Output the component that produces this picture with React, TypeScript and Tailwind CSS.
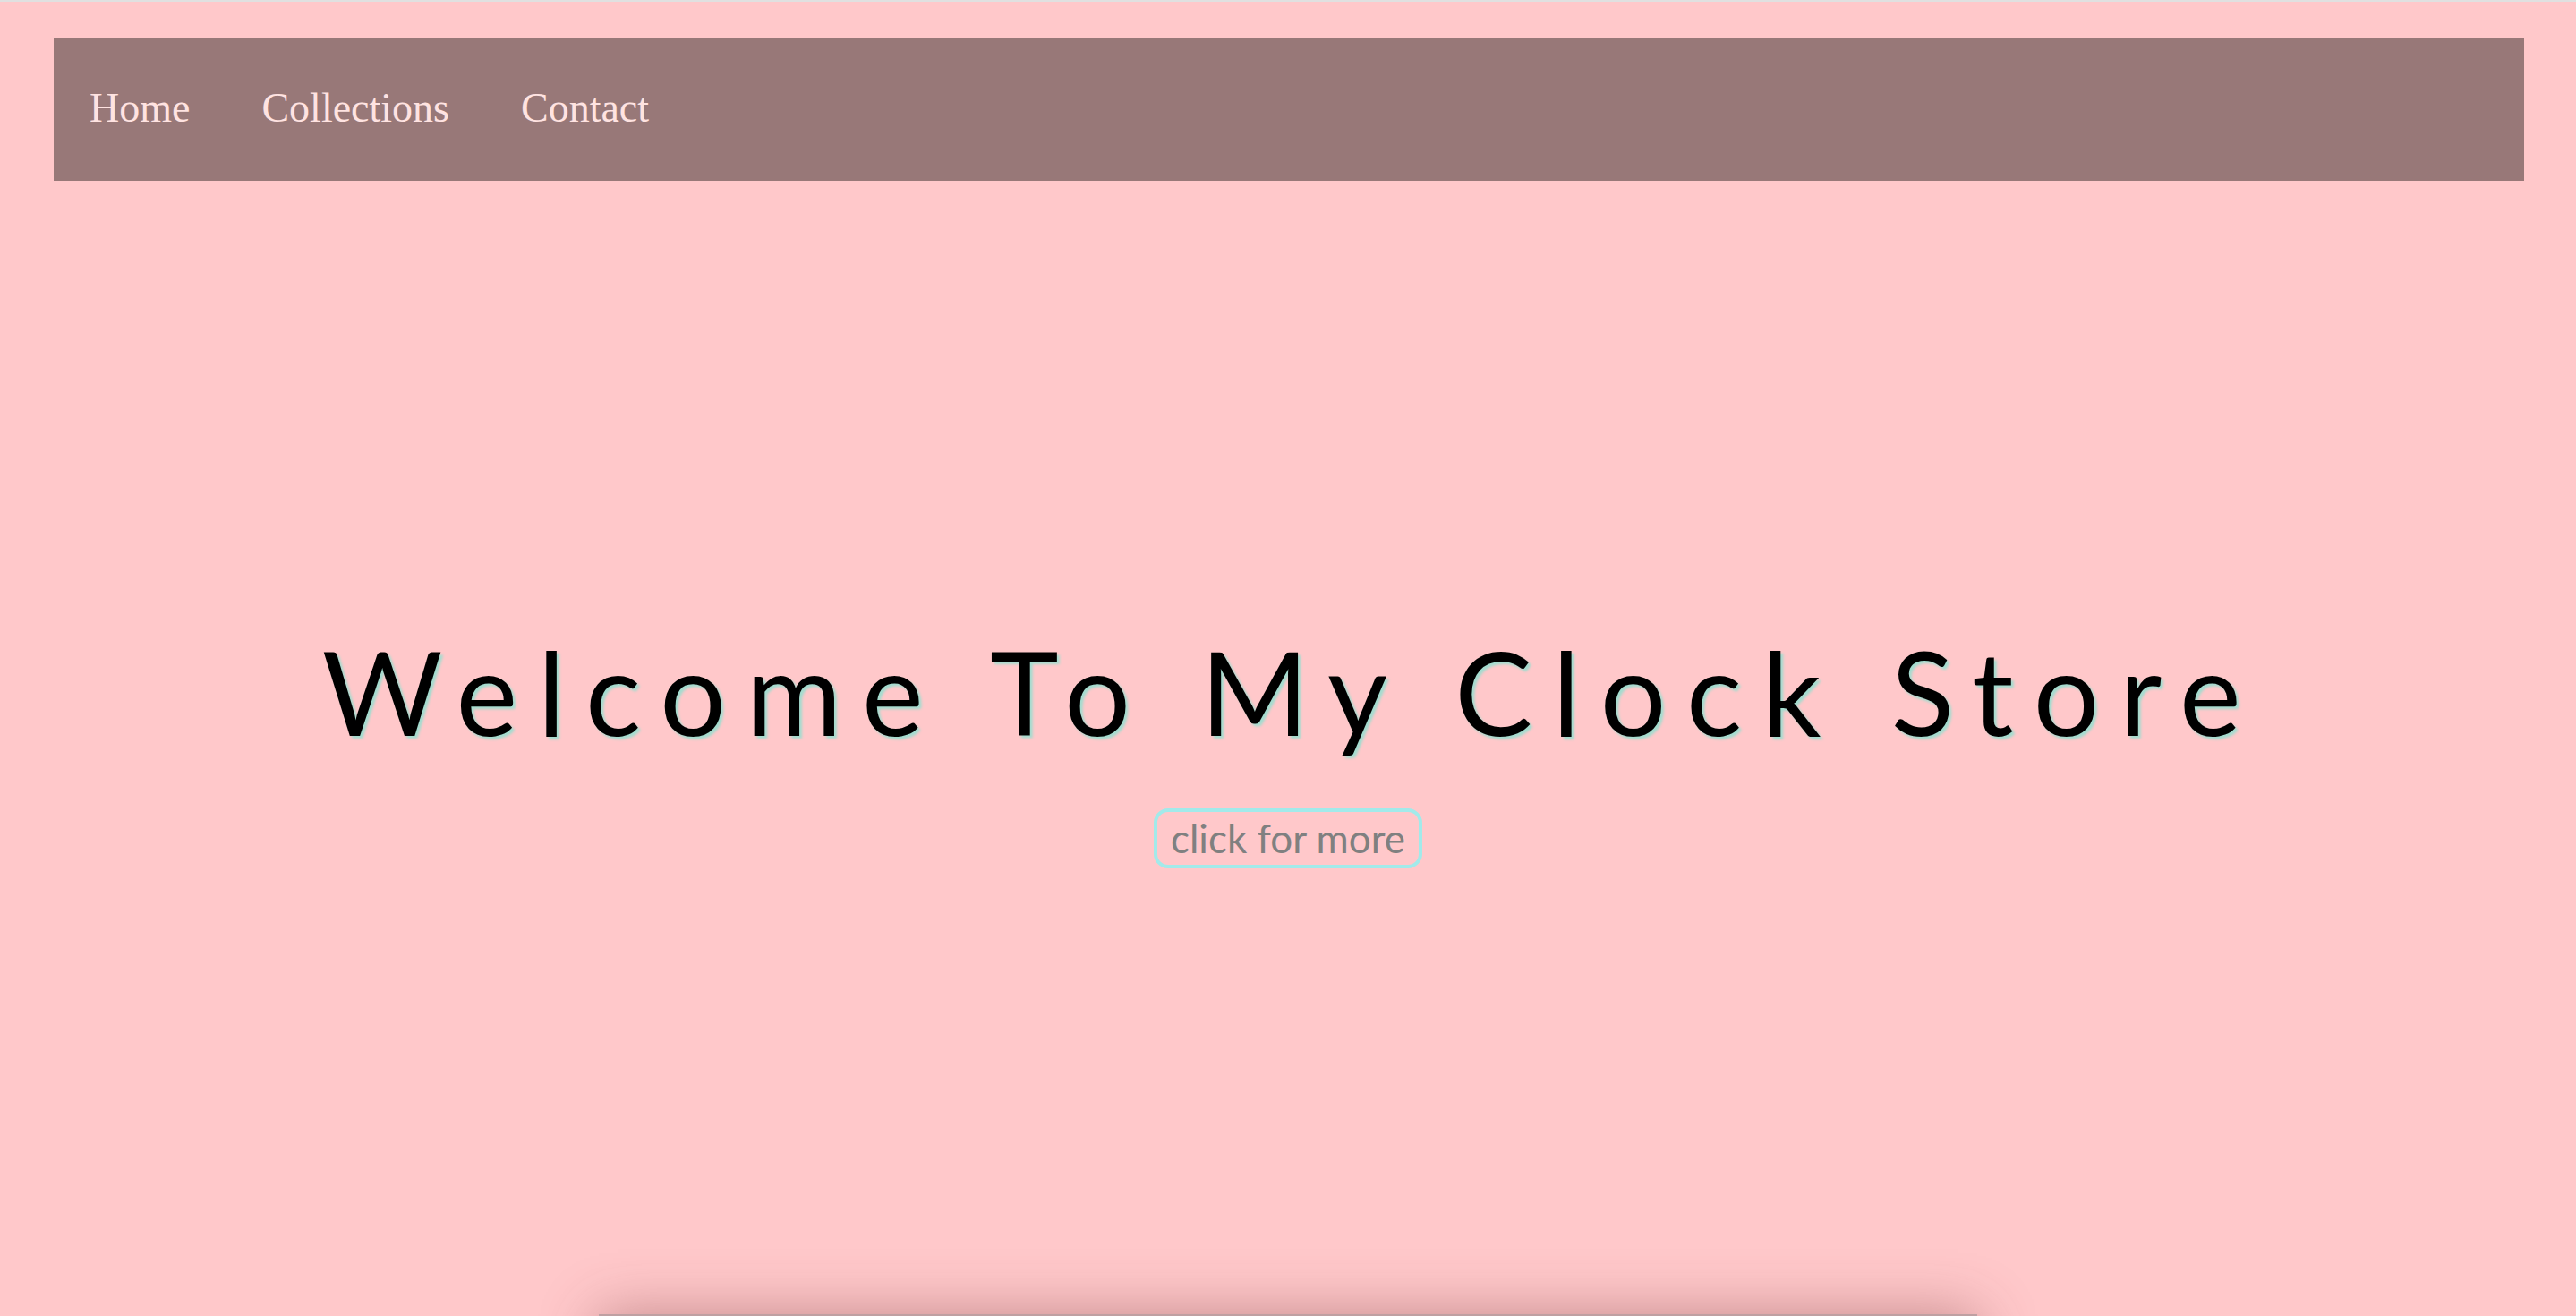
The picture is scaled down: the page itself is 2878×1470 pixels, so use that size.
export default function App() {
  return (
    <div className="min-h-screen bg-[#ffc8ca]">
      <div className="h-[2px] bg-[#e0e0e0]" />
      <nav className="ml-[60px] mr-[58px] mt-[40px] flex h-[160px] items-center bg-[#987878] pb-[4px]">
        {['Home', 'Collections', 'Contact'].map((label) => (
          <a
            key={label}
            href="#"
            className="px-[40px] font-['Liberation_Serif',serif] text-[46px] text-[#ffe3e1]"
          >
            {label}
          </a>
        ))}
      </nav>

      <section className="flex flex-col items-center pt-[505px]">
        <h1 className="pl-[8px] font-['Lato',sans-serif] text-[130px] font-normal leading-none tracking-[22.5px] text-black [text-shadow:3px_3px_3px_#a3dccf]">
          Welcome To My Clock Store
        </h1>
        <button
          type="button"
          className="mt-[66px] rounded-[16px] border-4 border-[#a2eaea] px-[15px] py-[4px] font-['Lato',sans-serif] text-[44px] leading-[51px] text-[#808080]"
        >
          click for more
        </button>
      </section>

      <div className="mx-auto mt-[498px] h-[400px] w-[1540px] bg-[#bfa0a2] shadow-[0_0_60px_rgba(120,60,60,0.45)]" />
    </div>
  )
}
